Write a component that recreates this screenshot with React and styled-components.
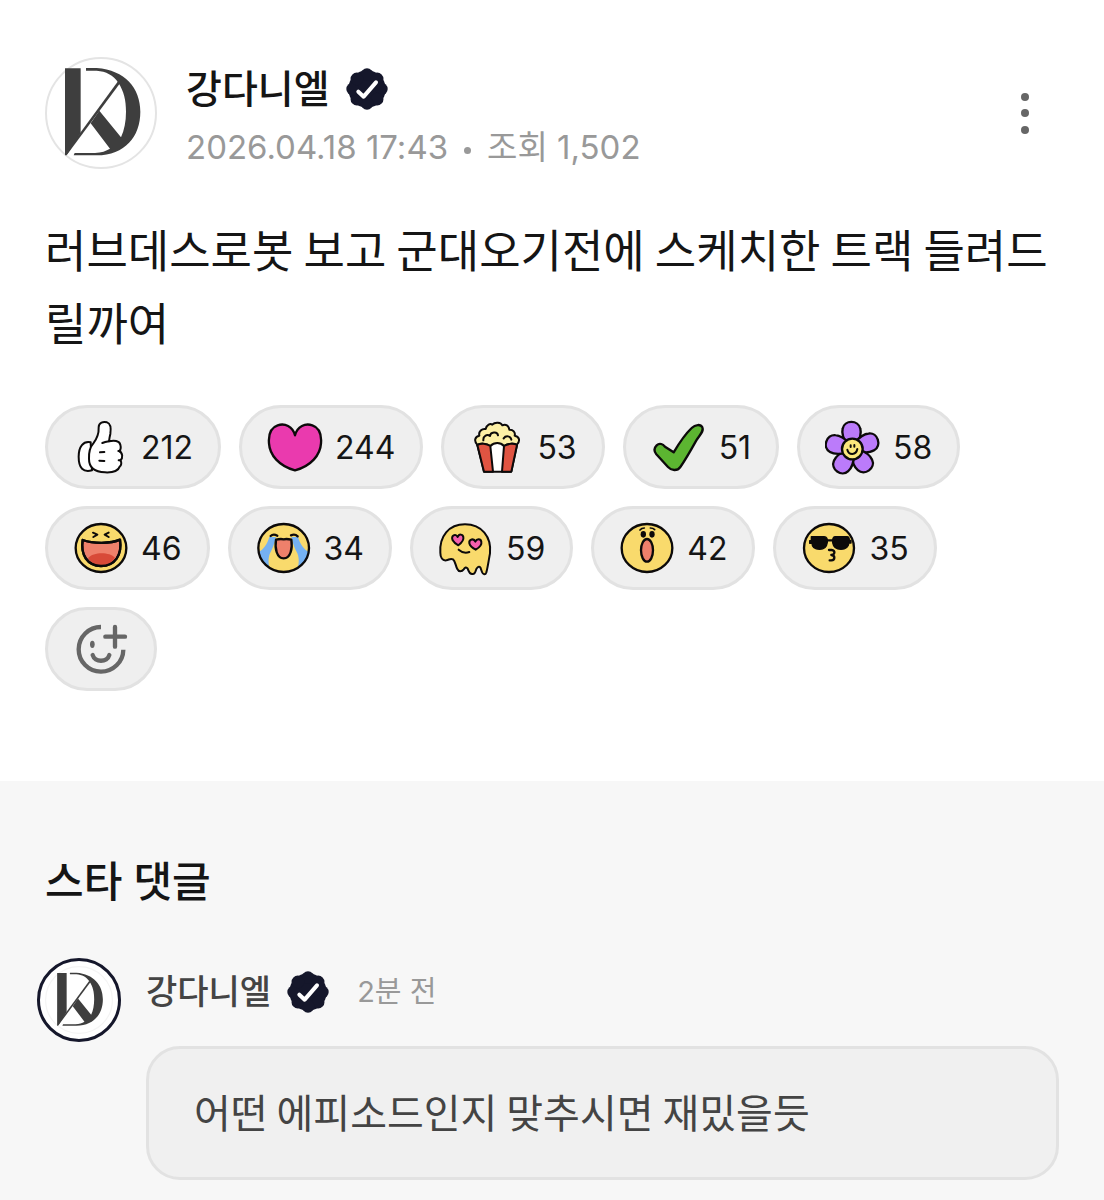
import styled, { createGlobalStyle } from "styled-components";

const GlobalStyle = createGlobalStyle`
  * {
    box-sizing: border-box;
  }
  body {
    margin: 0;
    background: #f7f7f7;
    color: #151515;
    font-family: Inter, "Noto Sans CJK KR", sans-serif;
  }
`;

const Page = styled.main`
  min-height: 100vh;
`;

const Post = styled.article`
  padding: 57px 45px 90px;
  background: #ffffff;
`;

const PostHeader = styled.header`
  display: flex;
  align-items: center;
  gap: 29px;
`;

const Author = styled.div`
  flex: 1;
  display: flex;
  flex-direction: column;
  gap: 12px;
  padding-top: 8px;
`;

const NameRow = styled.div`
  display: flex;
  align-items: center;
  gap: 16px;
`;

const Name = styled.span`
  font-size: ${(props) => (props.$small ? "34px" : "39px")};
  line-height: 48px;
  font-weight: 500;
  color: ${(props) => (props.$small ? "#444444" : "#151515")};
`;

const Meta = styled.p`
  margin: 0;
  font-size: 33px;
  line-height: 44px;
  color: #999999;
`;

const Dot = styled.span`
  display: inline-block;
  width: 7px;
  height: 7px;
  margin: 0 16px;
  border-radius: 50%;
  background: #999999;
  vertical-align: middle;
`;

const MoreButton = styled.button`
  width: 68px;
  height: 68px;
  padding: 0;
  border: 0;
  background: none;
  cursor: pointer;
`;

const Body = styled.p`
  margin: 43px 0 0;
  font-family: "Noto Sans CJK KR", sans-serif;
  font-size: 45px;
  line-height: 73px;
`;

const Reactions = styled.div`
  display: flex;
  flex-wrap: wrap;
  gap: 17px 18px;
  margin-top: 47px;
`;

const Reaction = styled.button`
  display: flex;
  align-items: center;
  gap: 12px;
  height: 84px;
  padding: 0 25px;
  border: 3px solid #e2e2e2;
  border-radius: 42px;
  background: #efefef;
  color: #151515;
  font-family: inherit;
  font-size: 32px;
  cursor: pointer;
`;

const Icon = styled.svg`
  display: block;
  flex: none;
  width: 56px;
  height: 56px;
  stroke-linecap: round;
  stroke-linejoin: round;
`;

const AvatarSvg = styled.svg`
  display: block;
  flex: none;
  width: ${(props) => (props.$small ? "68px" : "112px")};
  height: ${(props) => (props.$small ? "68px" : "112px")};
`;

const AvatarRing = styled.div`
  display: flex;
  align-items: center;
  justify-content: center;
  width: 84px;
  height: 84px;
  border: 3px solid #15172b;
  border-radius: 50%;
  background: #ffffff;
`;

const BadgeSvg = styled.svg`
  flex: none;
  width: 42px;
  height: 42px;
`;

const Comments = styled.section`
  padding: 73px 45px 20px 37px;
`;

const CommentsTitle = styled.h2`
  margin: 0 0 48px 8px;
  font-size: 42px;
  line-height: 56px;
  font-weight: 500;
`;

const Comment = styled.article`
  display: grid;
  grid-template-columns: 84px 1fr;
  column-gap: 25px;
`;

const CommentContent = styled.div`
  padding-top: 10px;
`;

const Time = styled.time`
  margin-left: 12px;
  font-size: 29px;
  line-height: 44px;
  color: #999999;
`;

const Bubble = styled.p`
  margin: 30px 0 0;
  padding: 32px 45px 36px;
  border: 3px solid #e2e2e2;
  border-radius: 34px;
  background: #f0f0f0;
  color: #444444;
  font-family: "Noto Sans CJK KR", sans-serif;
  font-size: 40px;
  line-height: 60px;
`;

const INK = "#0c0a0a";
const YELLOW = "#f9da6c";

const Avatar = ({ small }) => (
  <AvatarSvg $small={small} viewBox="45 51 336 336" aria-hidden="true">
    <circle
      cx="213"
      cy="219"
      r="165"
      fill="#ffffff"
      stroke={small ? "#f4f4f4" : "#e4e4e4"}
      strokeWidth="6"
    />
    <g fill="#3e3e3e">
      <path d="M105 85H152V278L110 346H105Z" />
      <path d="M168 84H200C285 90 331 145 331 215C331 290 285 345 200 346H131L134 339H195C215 338 228 333 240 326L182 250L208 212L273 292C283 270 288 245 288 215C288 180 282 155 265 128C250 105 228 94 200 92H168Z" />
      <path d="M264 124L270 130L112 343L107 338Z" />
    </g>
  </AvatarSvg>
);

const Badge = () => (
  <BadgeSvg viewBox="-63 -63 126 126" role="img" aria-label="인증됨">
    <circle r="56" fill="#15172b" />
    {[0, 45, 90, 135, 180, 225, 270, 315].map((angle) => (
      <circle
        key={angle}
        cy="-43"
        r="19"
        fill="#15172b"
        transform={`rotate(${angle})`}
      />
    ))}
    <path
      d="M-26 8L-10 23L27 -20"
      fill="none"
      stroke="#ffffff"
      strokeWidth="12"
      strokeLinecap="round"
      strokeLinejoin="round"
    />
  </BadgeSvg>
);

const ThumbIcon = () => (
  <Icon viewBox="99 57 168 168" fill="#ffffff" stroke={INK} strokeWidth="6">
    <path d="M152 127C130 122 116 140 116 170C116 205 130 218 156 211Z" />
    <path d="M160 130C170 117 177 102 176 82C176 67 190 64 201 67C214 71 213 88 211 102C209 110 208 116 207 124C222 120 238 122 241 134C244 145 240 151 237 153C248 158 250 173 241 181C246 187 244 197 239 200C234 215 215 218 195 217C165 216 147 205 147 177C146 155 150 141 160 130Z" />
    <path d="M187 129C194 126 200 125 207 124M241 153L235 153M242 181L236 181M180 157L193 156M178 182L193 183" fill="none" />
  </Icon>
);

const HeartIcon = () => (
  <Icon viewBox="684 57 168 168">
    <path
      d="M768 106C761 78 737 69 716 76C695 83 688 105 690 130C692 165 720 198 768 211C816 198 844 165 846 130C848 105 841 83 820 76C799 69 775 78 768 106Z"
      fill="#ea3aae"
      stroke={INK}
      strokeWidth="7"
    />
  </Icon>
);

const PopcornIcon = () => (
  <Icon viewBox="120 57 168 168" stroke={INK} strokeWidth="6">
    <path d="M146 136C134 124 137 109 151 107C148 94 159 85 170 87C173 74 184 69 190 74C198 65 216 67 220 76C230 71 240 77 241 89C252 88 260 97 257 107C272 109 275 124 262 136L204 150Z" fill="#fdf0a6" />
    <path d="M145 135C155 128 173 130 184 138C196 126 214 126 225 138C237 130 254 128 264 135L247 215H165Z" fill="#ffffff" />
    <path d="M145 135C156 129 173 131 184 138L192 215H165Z" fill="#e05442" />
    <path d="M264 135C254 129 236 131 225 138L219 215H247Z" fill="#e05442" />
    <path d="M163 121C162 107 175 101 183 108C184 96 205 93 207 106M224 115C230 106 245 107 247 119" fill="none" />
  </Icon>
);

const CheckIcon = () => (
  <Icon viewBox="663 57 168 168">
    <path
      d="M680 136C689 127 699 133 705 140L731 157C747 130 765 103 785 84C796 73 812 72 817 82C822 94 810 104 799 121C784 148 767 178 751 201C742 214 724 212 714 201L679 163C671 153 671 145 680 136Z"
      fill="#5cb531"
      stroke={INK}
      strokeWidth="7"
    />
  </Icon>
);

const FlowerIcon = () => (
  <Icon viewBox="141 57 168 168" stroke={INK} strokeWidth="7">
    {[0, 72, 144, 216, 288].map((angle) => (
      <path
        key={angle}
        d="M208 136C197 118 190 101 194 86C199 59 241 59 247 86C251 101 245 118 236 136Z"
        fill="#bb7bfa"
        transform={`rotate(${angle} 223 147)`}
      />
    ))}
    <circle cx="223" cy="147" r="31" fill="#fbe77c" />
    <path d="M218 136V141M229 135V140M208 149C212 166 234 167 238 147" fill="none" strokeWidth="6" />
  </Icon>
);

const LaughIcon = () => (
  <Icon viewBox="99 60 168 168" stroke={INK} strokeWidth="7">
    <ellipse cx="183" cy="144" rx="76" ry="72" fill={YELLOW} />
    <path d="M128 120C158 131 212 132 240 119C247 165 225 198 183 198C142 197 121 165 128 120Z" fill="#ee806b" />
    <path d="M144 174C160 155 209 155 225 173C215 190 201 195 183 195C166 195 152 188 144 174Z" fill="#d84a38" stroke="none" />
    <path d="M128 120C158 131 212 132 240 119C247 165 225 198 183 198C142 197 121 165 128 120Z" fill="none" />
    <path d="M159 98L172 104L160 111M206 98L194 104L206 111" fill="none" strokeWidth="6" />
  </Icon>
);

const CryIcon = () => (
  <Icon viewBox="648 60 168 168" stroke={INK} strokeWidth="7">
    <ellipse cx="731" cy="144" rx="76" ry="72" fill={YELLOW} stroke="none" />
    <path d="M688 111H708C703 133 697 147 690 160C683 177 686 194 689 205C669 193 659 178 656 157C670 148 682 132 688 111Z" fill="#75b1f2" stroke="none" />
    <path d="M754 111H774C780 132 792 148 807 157C804 178 794 193 773 205C776 194 779 177 772 160C765 147 759 133 754 111Z" fill="#75b1f2" stroke="none" />
    <ellipse cx="731" cy="144" rx="76" ry="72" fill="none" />
    <path d="M708 119C716 117 724 116 731 118C738 116 746 117 754 119C758 145 752 175 731 175C710 175 704 145 708 119Z" fill="#ee806b" />
    <path d="M692 108C697 103 705 103 712 107M753 106C760 103 768 104 773 109" fill="none" />
  </Icon>
);

const MeltIcon = () => (
  <Icon viewBox="114 60 168 168" stroke={INK} strokeWidth="6">
    <path d="M121 158C118 109 146 73 195 73C245 73 275 111 270 160C266 181 263 204 259 217C256 226 249 224 246 216L241 202C237 198 233 201 229 207C225 219 224 223 216 222C208 222 206 213 203 206C199 200 195 202 191 208C186 215 176 216 172 207C166 196 166 183 159 178C151 174 148 179 139 181C127 183 121 172 121 158Z" fill={YELLOW} />
    <path d="M173 111C167 99 152 106 158 121C162 128 169 133 175 136C184 129 192 120 190 111C188 102 177 101 173 111Z" fill="#f55fae" />
    <path d="M226 125C222 114 206 117 208 130C210 139 219 145 227 149C237 143 246 134 244 125C242 115 230 116 226 125Z" fill="#f55fae" />
    <path d="M176 149C185 157 197 160 208 156" fill="none" />
  </Icon>
);

const ShockIcon = () => (
  <Icon viewBox="657 60 168 168" stroke={INK} strokeWidth="7">
    <ellipse cx="741" cy="144" rx="76" ry="72" fill={YELLOW} />
    <ellipse cx="741" cy="151" rx="18" ry="34" fill="#ee806b" />
    <ellipse cx="730" cy="103" rx="8" ry="10" fill={INK} stroke="none" />
    <ellipse cx="756" cy="103" rx="8" ry="10" fill={INK} stroke="none" />
    <path d="M720 90C723 86 728 84 733 84M751 84C756 84 761 86 764 89" fill="none" strokeWidth="5" />
  </Icon>
);

const CoolIcon = () => (
  <Icon viewBox="120 60 168 168" stroke={INK} strokeWidth="7">
    <ellipse cx="204" cy="144" rx="75" ry="72" fill={YELLOW} />
    <path d="M151 110H189C198 110 200 117 199 127C197 141 189 148 176 148C160 148 153 141 153 130H146V122H151Z" fill={INK} strokeWidth="4" />
    <path d="M222 110H258C265 110 265 115 265 121H270V129H264C262 142 254 148 240 148C226 148 217 141 215 128C214 117 215 111 222 110Z" fill={INK} strokeWidth="4" />
    <path d="M197 121H217" fill="none" />
    <path d="M204 150H212C224 151 222 164 211 165C223 166 223 180 211 181H206" fill="none" />
  </Icon>
);

const AddReactionIcon = () => (
  <Icon viewBox="129 63 168 168" fill="none" stroke="#666666" strokeWidth="13">
    <path d="M213 81A67 67 0 1 0 280 149" strokeLinecap="butt" />
    <path d="M255 81V140M226 110H285M188 165C194 188 232 188 238 165" />
    <ellipse cx="187" cy="133" rx="7" ry="11" fill="#666666" stroke="none" />
  </Icon>
);

const reactions = [
  { name: "좋아요", icon: ThumbIcon, count: 212 },
  { name: "하트", icon: HeartIcon, count: 244 },
  { name: "팝콘", icon: PopcornIcon, count: 53 },
  { name: "체크", icon: CheckIcon, count: 51 },
  { name: "꽃", icon: FlowerIcon, count: 58 },
  { name: "웃음", icon: LaughIcon, count: 46 },
  { name: "눈물", icon: CryIcon, count: 34 },
  { name: "사르르", icon: MeltIcon, count: 59 },
  { name: "놀람", icon: ShockIcon, count: 42 },
  { name: "선글라스", icon: CoolIcon, count: 35 },
];

export default function App() {
  return (
    <Page>
      <GlobalStyle />
      <Post>
        <PostHeader>
          <Avatar />
          <Author>
            <NameRow>
              <Name>강다니엘</Name>
              <Badge />
            </NameRow>
            <Meta>
              2026.04.18 17:43
              <Dot />
              조회 1,502
            </Meta>
          </Author>
          <MoreButton aria-label="더보기">
            <svg width="68" height="68" viewBox="0 0 68 68" fill="#666666">
              <circle cx="34" cy="18" r="4" />
              <circle cx="34" cy="34" r="4" />
              <circle cx="34" cy="51" r="4" />
            </svg>
          </MoreButton>
        </PostHeader>
        <Body>러브데스로봇 보고 군대오기전에 스케치한 트랙 들려드릴까여</Body>
        <Reactions>
          {reactions.map(({ name, icon: ReactionIcon, count }) => (
            <Reaction key={name} aria-label={`${name} ${count}`}>
              <ReactionIcon />
              {count}
            </Reaction>
          ))}
          <Reaction aria-label="반응 추가">
            <AddReactionIcon />
          </Reaction>
        </Reactions>
      </Post>
      <Comments>
        <CommentsTitle>스타 댓글</CommentsTitle>
        <Comment>
          <AvatarRing>
            <Avatar small />
          </AvatarRing>
          <CommentContent>
            <NameRow>
              <Name $small>강다니엘</Name>
              <Badge />
              <Time>2분 전</Time>
            </NameRow>
            <Bubble>어떤 에피소드인지 맞추시면 재밌을듯</Bubble>
          </CommentContent>
        </Comment>
      </Comments>
    </Page>
  );
}
